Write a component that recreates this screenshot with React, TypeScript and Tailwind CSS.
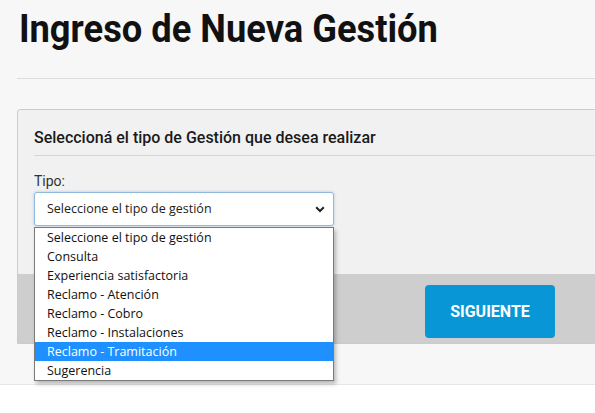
const OPTIONS = [
  "Seleccione el tipo de gestión",
  "Consulta",
  "Experiencia satisfactoria",
  "Reclamo - Atención",
  "Reclamo - Cobro",
  "Reclamo - Instalaciones",
  "Reclamo - Tramitación",
  "Sugerencia",
];

const ACTIVE = "Reclamo - Tramitación";

function Chevron() {
  return (
    <svg width="10" height="7" viewBox="0 0 10 7" aria-hidden="true">
      <path d="M1.2 1.2 5 5 8.8 1.2" fill="none" stroke="#222" strokeWidth="2" />
    </svg>
  );
}

export default function App() {
  return (
    <div className="h-[413px] w-[595px] overflow-hidden bg-white font-['Roboto',sans-serif] text-[#222]">
      <div className="h-[385px] border-b border-[#e6e6e6] bg-[#f7f7f7] pl-[17px]">
        <h1 className="h-[78px] origin-left scale-x-[0.955] whitespace-nowrap pl-[2px] pt-[6px] text-[38px] font-bold leading-[46px] text-[#111]">
          Ingreso de Nueva Gestión
        </h1>
        <div className="h-px bg-[#dcdcdc]" />

        <section className="mt-[30px] w-[640px] rounded-tl-[3px] border border-[#cbcbcb] bg-[#f1f1f1]">
          <div className="px-[16px] pt-[18px]">
            <h2 className="border-b border-[#d6d6d6] pb-[8px] text-[16px] font-medium leading-[19px] text-[#1a1a1a]">
              Seleccioná el tipo de Gestión que desea realizar
            </h2>
            <p className="pt-[17px] text-[14px] leading-[16px] text-[#333]">Tipo:</p>
            <div className="relative mt-[3px] w-[300px] pb-[48px]">
              <div className="flex h-[34px] items-center justify-between rounded-[3px] border border-[#8fb9df] bg-white pl-[12px] pr-[8px] shadow-[0_0_3px_rgba(102,160,220,0.5)]">
                <span className="font-['Open_Sans',sans-serif] text-[12.5px] text-[#222]">
                  Seleccione el tipo de gestión
                </span>
                <Chevron />
              </div>
              <ul className="absolute left-0 top-[35px] z-10 w-[300px] border border-[#7a7a7a] bg-white shadow-[2px_3px_4px_rgba(0,0,0,0.25)]">
                {OPTIONS.map((opt) => (
                  <li
                    key={opt}
                    className={
                      opt === ACTIVE
                        ? "h-[19px] bg-[#1e90ff] pl-[12px] font-['Open_Sans',sans-serif] text-[12.5px] leading-[19px] text-white"
                        : "h-[19px] pl-[12px] font-['Open_Sans',sans-serif] text-[12.5px] leading-[19px] text-[#111]"
                    }
                  >
                    {opt}
                  </li>
                ))}
              </ul>
            </div>
          </div>
          <div className="flex h-[69px] items-start bg-[#cecece] pl-[407px] pt-[11px]">
            <button className="h-[53px] w-[130px] rounded-[4px] bg-[#0896d6] text-[16px] font-bold text-white">
              SIGUIENTE
            </button>
          </div>
        </section>
      </div>
    </div>
  );
}
